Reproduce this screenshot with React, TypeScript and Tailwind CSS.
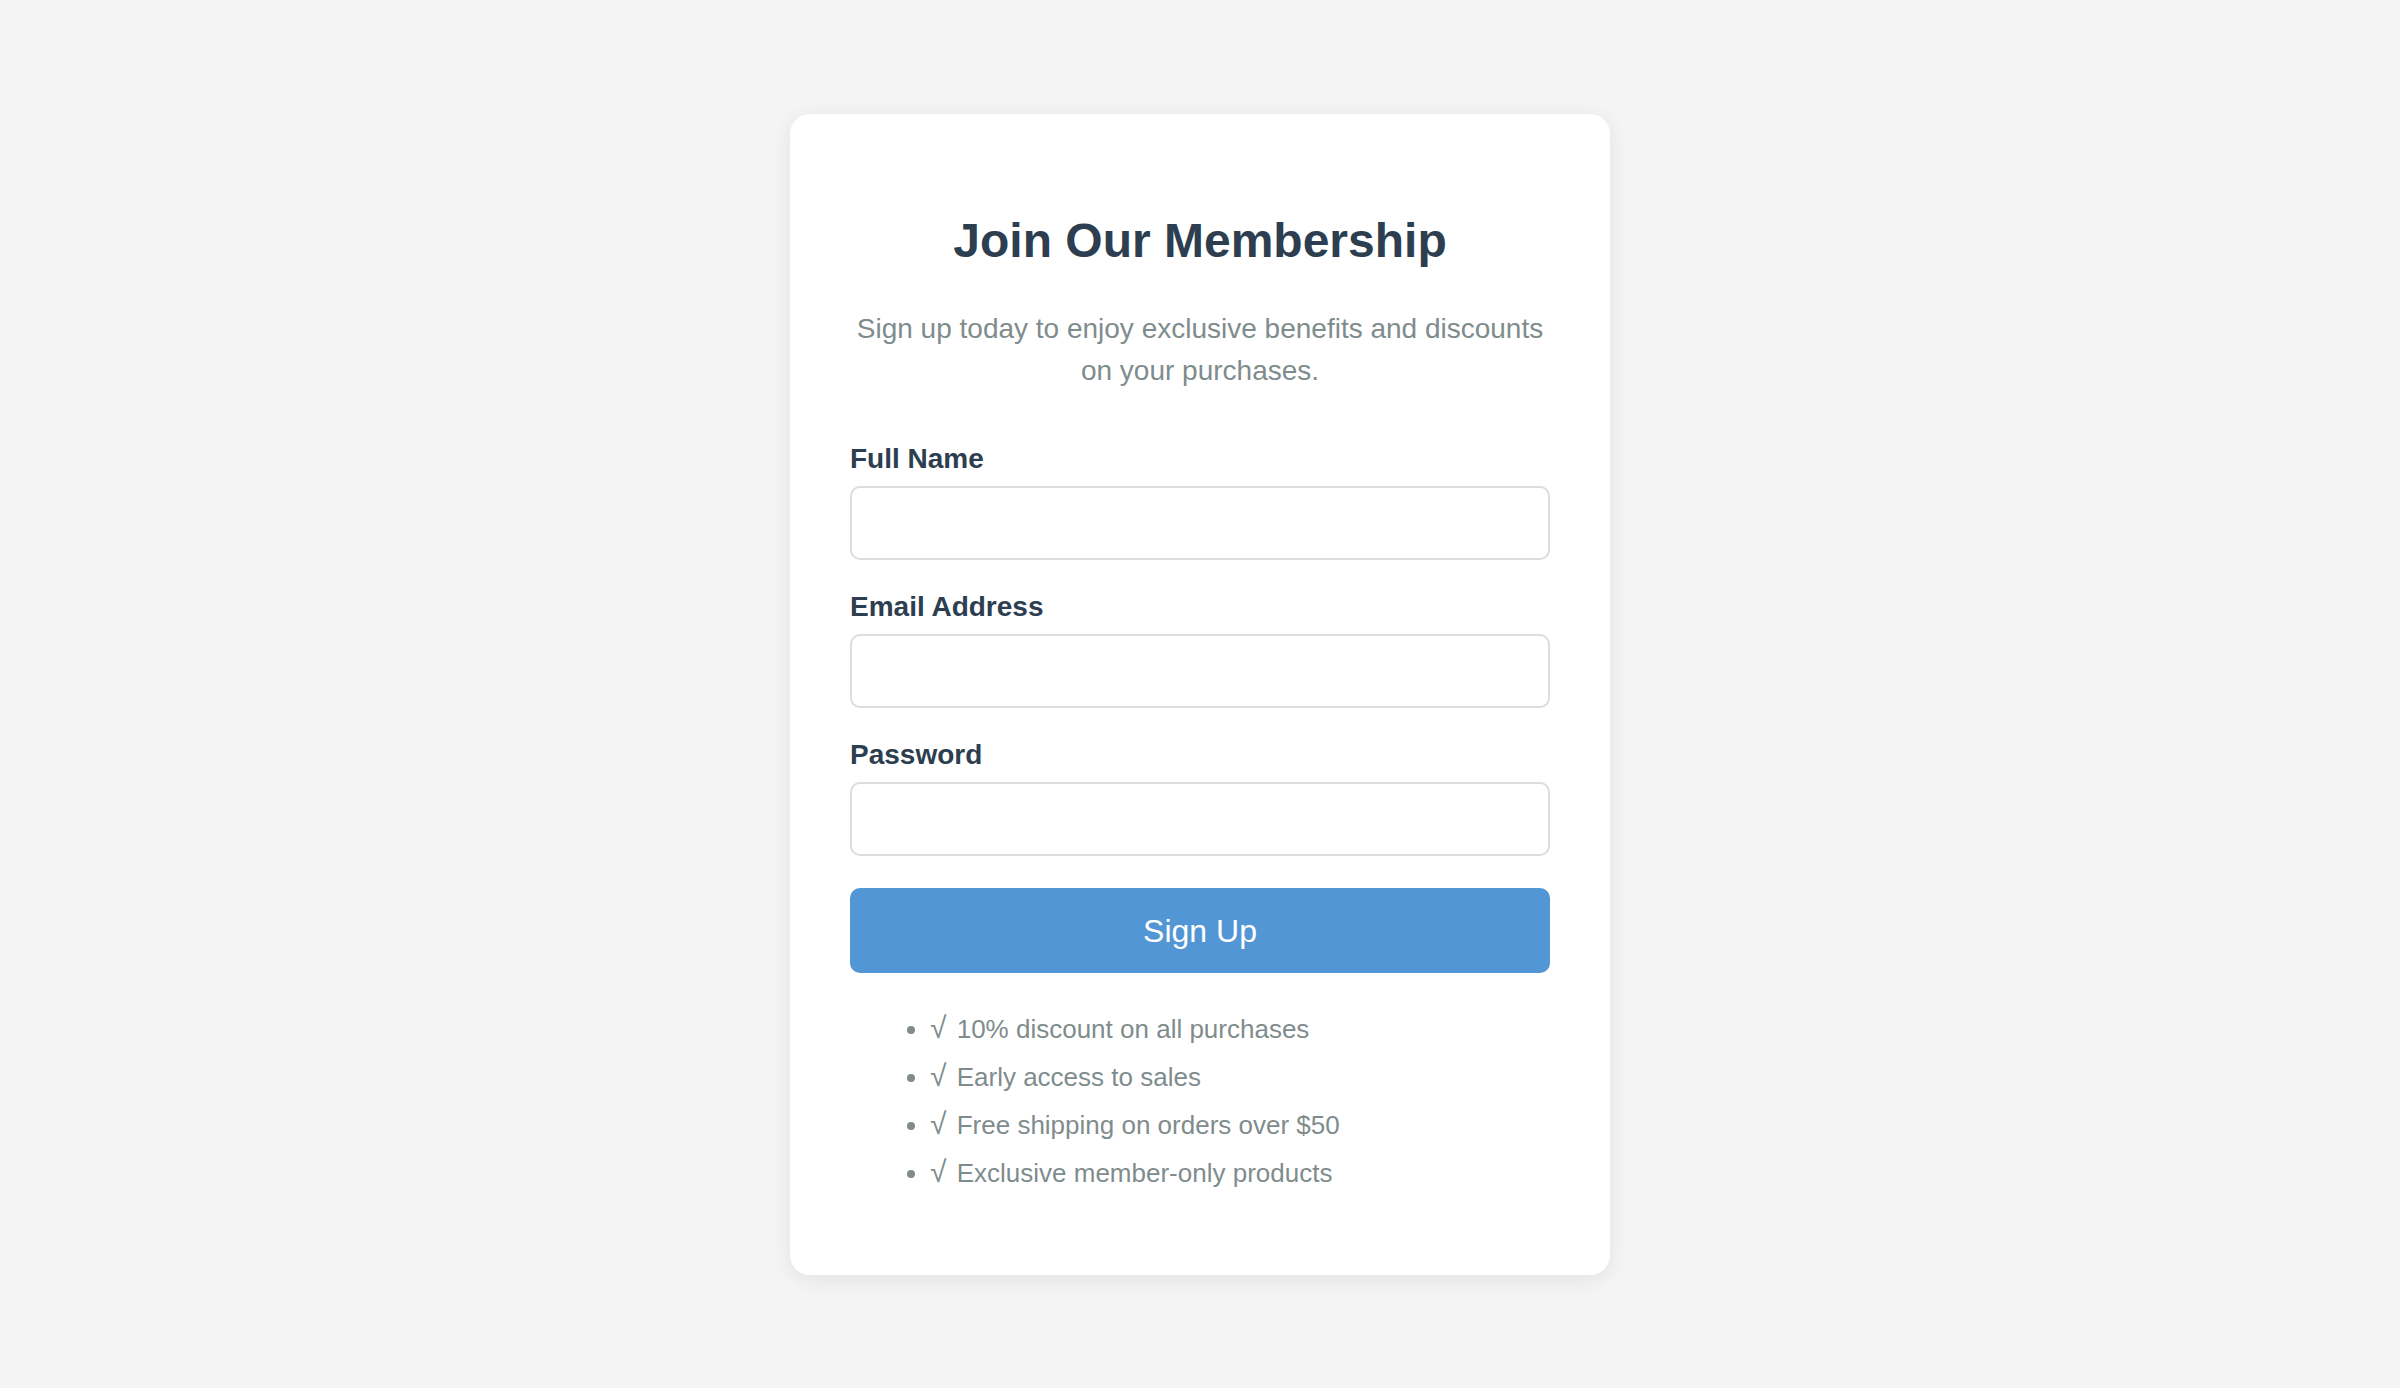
const benefits = [
  "10% discount on all purchases",
  "Early access to sales",
  "Free shipping on orders over $50",
  "Exclusive member-only products",
];

const fields = [
  { id: "name", label: "Full Name", type: "text" },
  { id: "email", label: "Email Address", type: "email" },
  { id: "password", label: "Password", type: "password" },
];

export default function App() {
  return (
    <div className="min-h-screen w-full bg-[#f4f4f4] flex justify-center pt-[114px] font-['Liberation_Sans',Arial,sans-serif]">
      <div className="w-[820px] h-fit bg-white rounded-[20px] shadow-[0_4px_20px_rgba(0,0,0,0.08)] px-[60px] pt-[60px] pb-[60px]">
        <h1 className="mt-[39px] text-center text-[48px] leading-[56px] font-bold text-[#2c3e50]">
          Join Our Membership
        </h1>
        <p className="mt-[39px] text-center text-[28px] leading-[42px] text-[#7f8c8d]">
          Sign up today to enjoy exclusive benefits and discounts on your purchases.
        </p>

        {/* Form */}
        <form className="mt-[50px] flex flex-col gap-[30px]" onSubmit={(e) => e.preventDefault()}>
          {fields.map((f) => (
            <div key={f.id} className="flex flex-col">
              <label htmlFor={f.id} className="text-[28px] leading-[34px] font-bold text-[#2c3e50] mb-[10px]">
                {f.label}
              </label>
              <input
                id={f.id}
                type={f.type}
                className="h-[74px] w-full rounded-[10px] border-2 border-[#dddddd] bg-white px-[20px] text-[28px] outline-none"
              />
            </div>
          ))}
          <button
            type="submit"
            className="mt-[2px] h-[85px] w-full rounded-[10px] bg-[#5296d5] text-white text-[32px] leading-none"
          >
            Sign Up
          </button>
        </form>

        <ul className="mt-[32px] mb-[18px] list-disc pl-[80px] text-[26px] leading-[48px] text-[#7f8c8d] marker:text-[#7f8c8d]">
          {benefits.map((b) => (
            <li key={b}>
              <span className="mr-[3px] text-[30px] leading-none">√</span> {b}
            </li>
          ))}
        </ul>
      </div>
    </div>
  );
}
